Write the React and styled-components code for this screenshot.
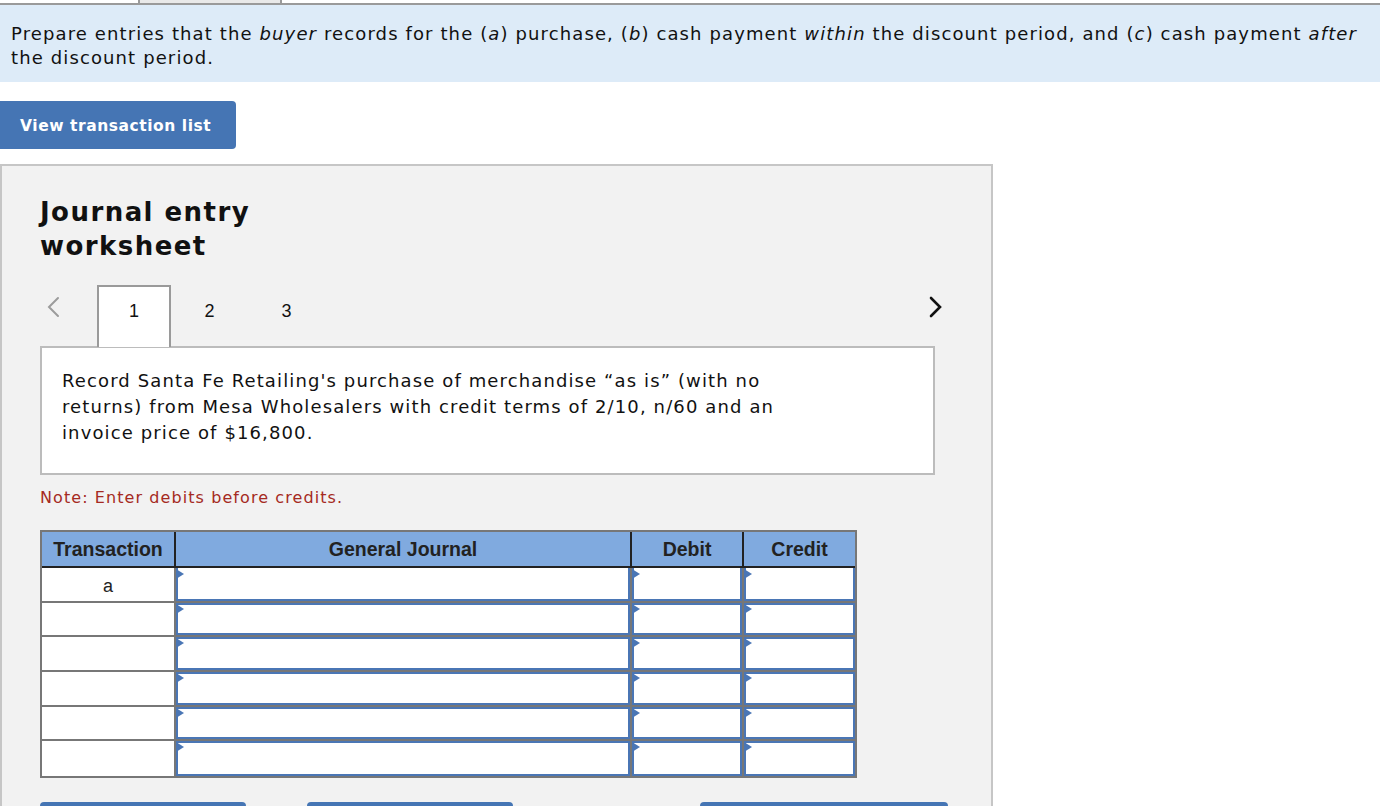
import React from "react";
import styled, { createGlobalStyle } from "styled-components";

const Global = createGlobalStyle`
  html, body { margin: 0; padding: 0; background: #fff; }
  body { font-family: "DejaVu Sans", Verdana, sans-serif; color: #111; }
  * { box-sizing: border-box; }
`;

const Page = styled.div`
  width: 1380px;
  display: flex;
  flex-direction: column;
  align-items: flex-start;
`;

const TopStrip = styled.div`
  display: flex;
  width: 100%;
  height: 5px;
`;

const StripTab = styled.div`
  width: ${(p) => p.$w}px;
  flex: ${(p) => (p.$grow ? 1 : "none")};
  background: ${(p) => p.$bg};
  border-bottom: 2px solid #9a9a9a;
  border-right: ${(p) => (p.$edge ? "2px solid #9a9a9a" : "none")};
`;

const Banner = styled.div`
  width: 100%;
  background: #ddebf8;
  padding: 17px 11px 12px;
  font-size: 18px;
  line-height: 24px;
  letter-spacing: 1.12px;
  color: #111;
`;

const PrimaryButton = styled.button`
  margin-top: 19px;
  width: 236px;
  height: 48px;
  border: none;
  border-radius: 0 4px 4px 0;
  background: #4575b4;
  color: #fff;
  font-family: "DejaVu Sans", Verdana, sans-serif;
  font-weight: bold;
  font-size: 15.5px;
  letter-spacing: 0.55px;
  text-align: left;
  padding: 2px 0 0 20px;
`;

const Panel = styled.section`
  margin-top: 15px;
  width: 993px;
  background: #f2f2f2;
  border: 2px solid #c6c6c6;
  border-bottom: none;
  padding: 29px 0 0 38px;
  display: flex;
  flex-direction: column;
`;

const Title = styled.h2`
  margin: 0;
  width: 260px;
  font-size: 26px;
  line-height: 34px;
  font-weight: bold;
  letter-spacing: 1.45px;
  color: #111;
`;

const Nav = styled.div`
  margin-top: 22px;
  width: 895px;
  display: flex;
  align-items: flex-end;
  height: 62px;
`;

const Chevron = styled.div`
  display: flex;
  align-items: center;
  height: 100%;
  padding-bottom: 18px;
  margin-left: ${(p) => p.$ml || 0}px;
  margin-right: ${(p) => p.$mr || 0}px;
`;

const Tabs = styled.div`
  display: flex;
  flex: 1;
  height: 100%;
  align-items: stretch;
`;

const Tab = styled.div`
  width: ${(p) => (p.$active ? 74 : 77)}px;
  height: 62px;
  background: ${(p) => (p.$active ? "#fff" : "transparent")};
  border: 2px solid ${(p) => (p.$active ? "#9a9a9a" : "transparent")};
  border-bottom: none;
  display: flex;
  justify-content: center;
  padding-top: 14px;
  font-family: "Liberation Sans", Arial, sans-serif;
  font-size: 18px;
  color: #111;
  position: relative;
  z-index: 1;
`;

const Question = styled.div`
  margin-top: -1px;
  width: 895px;
  background: #fff;
  border: 2px solid #bcbcbc;
  padding: 20px 20px 27px;
  font-size: 18px;
  line-height: 26px;
  letter-spacing: 1.12px;
  color: #111;
`;

const QuestionText = styled.p`
  margin: 0;
  max-width: 750px;
`;

const Note = styled.p`
  margin: 12px 0 0;
  font-size: 16px;
  line-height: 22px;
  letter-spacing: 1.08px;
  color: #a52a22;
`;

const Grid = styled.div`
  margin-top: 21px;
  width: 817px;
  display: grid;
  grid-template-columns: 134px 456px 112px 111px;
  grid-template-rows: 36px repeat(6, 34.67px);
  border: 2px solid #777;
  background: #777;
`;

const HeadCell = styled.div`
  background: #80aadf;
  border-right: ${(p) => (p.$last ? "none" : "2px solid #222")};
  border-bottom: 2px solid #222;
  display: flex;
  align-items: center;
  justify-content: center;
  font-family: "Liberation Sans", Arial, sans-serif;
  font-weight: bold;
  font-size: 19.5px;
  color: #222;
`;

const TxCell = styled.div`
  background: #fff;
  border-right: 2px solid #777;
  border-bottom: ${(p) => (p.$last ? "none" : "2px solid #777")};
  display: flex;
  justify-content: center;
  padding-top: 8px;
  font-family: "Liberation Sans", Arial, sans-serif;
  font-size: 18px;
  color: #222;
`;

const EntryCell = styled.div`
  position: relative;
  background: #777;
  border-right: ${(p) => (p.$lastCol ? "none" : "2px solid #777")};
  border-bottom: ${(p) => (p.$lastRow ? "none" : "2px solid #777")};
  display: flex;
`;

const EntryInput = styled.div`
  flex: 1;
  background: #fff;
  border: 2px solid #4a76b5;
  border-top-width: ${(p) => (p.$first ? 0 : 2)}px;
`;

const Flag = styled.span`
  position: absolute;
  top: 1px;
  left: 0;
  width: 0;
  height: 0;
  border-top: 5px solid transparent;
  border-bottom: 5px solid transparent;
  border-left: 8px solid #4a76b5;
`;

const ActionRow = styled.div`
  margin-top: 24px;
  display: flex;
`;

const ActionButton = styled.div`
  width: ${(p) => p.$w}px;
  margin-left: ${(p) => p.$ml || 0}px;
  height: 40px;
  background: #4575b4;
  border-radius: 4px;
`;

const ChevronIcon = ({ dir, color, sw }) => (
  <svg width="16" height="22" viewBox="0 0 16 22">
    <polyline
      points={dir === "left" ? "13,2 4,11 13,20" : "3,2 12,11 3,20"}
      fill="none"
      stroke={color}
      strokeWidth={sw}
      strokeLinecap="round"
      strokeLinejoin="miter"
    />
  </svg>
);

const rows = [0, 1, 2, 3, 4, 5];

export default function App() {
  return (
    <>
      <Global />
      <Page>
        <TopStrip>
          <StripTab $w={140} $bg="#fff" $edge />
          <StripTab $w={142} $bg="#e9e9e9" $edge />
          <StripTab $grow $bg="#fff" />
        </TopStrip>
        <Banner>
          Prepare entries that the <i>buyer</i> records for the (<i>a</i>) purchase, (<i>b</i>) cash payment{" "}
          <i>within</i> the discount period, and (<i>c</i>) cash payment <i>after</i> the discount period.
        </Banner>
        <PrimaryButton>View transaction list</PrimaryButton>
        <Panel>
          <Title>Journal entry worksheet</Title>
          <Nav>
            <Chevron $ml={5} $mr={36}>
              <ChevronIcon dir="left" color="#9c9c9c" sw={2} />
            </Chevron>
            <Tabs>
              <Tab $active>1</Tab>
              <Tab>2</Tab>
              <Tab>3</Tab>
            </Tabs>
            <Chevron $mr={-9}>
              <ChevronIcon dir="right" color="#111" sw={2.6} />
            </Chevron>
          </Nav>
          <Question>
            <QuestionText>
              Record Santa Fe Retailing's purchase of merchandise “as is” (with no returns) from Mesa
              Wholesalers with credit terms of 2/10, n/60 and an invoice price of $16,800.
            </QuestionText>
          </Question>
          <Note>Note: Enter debits before credits.</Note>
          <Grid>
            <HeadCell>Transaction</HeadCell>
            <HeadCell>General Journal</HeadCell>
            <HeadCell>Debit</HeadCell>
            <HeadCell $last>Credit</HeadCell>
            {rows.map((r) => (
              <React.Fragment key={r}>
                <TxCell $last={r === 5}>{r === 0 ? "a" : ""}</TxCell>
                {[0, 1, 2].map((c) => (
                  <EntryCell key={c} $lastCol={c === 2} $lastRow={r === 5}>
                    <EntryInput $first={r === 0} />
                    <Flag />
                  </EntryCell>
                ))}
              </React.Fragment>
            ))}
          </Grid>
          <ActionRow>
            <ActionButton $w={206} />
            <ActionButton $w={206} $ml={61} />
            <ActionButton $w={248} $ml={187} />
          </ActionRow>
        </Panel>
      </Page>
    </>
  );
}
